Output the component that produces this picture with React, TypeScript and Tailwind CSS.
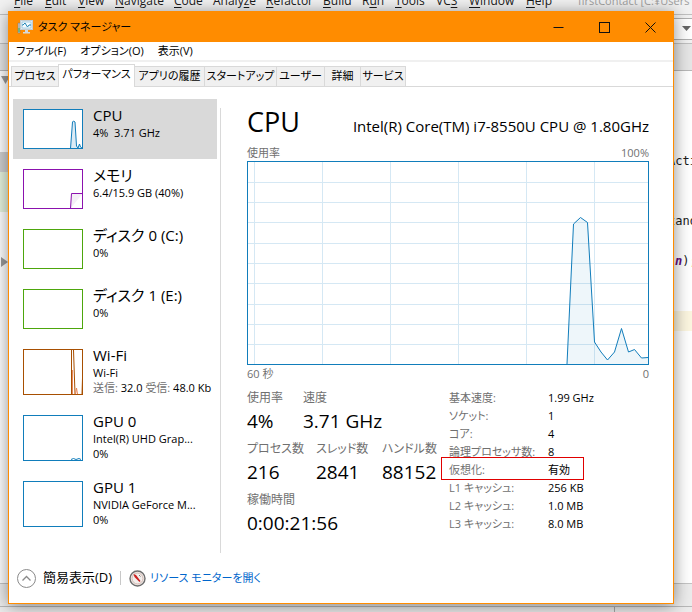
import React from "react";

interface Device {
  name: string;
  lines: React.ReactNode[];
  color: string;
  tall?: boolean;
  graph?: React.ReactNode;
}

const devices: Device[] = [
  {
    name: "CPU",
    lines: ["4%  3.71 GHz"],
    color: "border-[#117dbb]",
    graph: (
      <path
        d="M46.5 38.5 L48.5 12 L49.5 11 L51 12 L52.5 36 L54 38 L55.5 34 L56.5 37 L58 38"
        fill="#dcebf5"
        stroke="#117dbb"
      />
    ),
  },
  {
    name: "メモリ",
    lines: ["6.4/15.9 GB (40%)"],
    color: "border-[#8b12ae]",
    graph: (
      <path
        d="M46.5 38.5 L47.5 23.5 H58.5"
        fill="#f4f0f6"
        stroke="#8b12ae"
      />
    ),
  },
  { name: "ディスク 0 (C:)", lines: ["0%"], color: "border-[#4da60c]" },
  { name: "ディスク 1 (E:)", lines: ["0%"], color: "border-[#4da60c]" },
  {
    name: "Wi-Fi",
    lines: [
      "Wi-Fi",
      <>
        <span className="text-[#707070]">送信:</span> 32.0{" "}
        <span className="text-[#707070]">受信:</span> 48.0 Kb
      </>,
    ],
    color: "border-[#a74f01]",
    tall: true,
    graph: (
      <g fill="none" stroke="#a74f01">
        <path d="M47.5 44 V0 M49.5 0 L51 44 M58 44 L58.5 28" />
        <path d="M48.5 20 V44 M51.5 44 L52.5 38 L53.5 44" stroke="#e8875a" />
      </g>
    ),
  },
  {
    name: "GPU 0",
    lines: ["Intel(R) UHD Grap...", "0%"],
    color: "border-[#117dbb]",
    tall: true,
    graph: (
      <path
        d="M47 43.5 L49.5 42.5 L52 43.5 L55 42.5 L57 43.5"
        fill="none"
        stroke="#117dbb"
      />
    ),
  },
  {
    name: "GPU 1",
    lines: ["NVIDIA GeForce M...", "0%"],
    color: "border-[#117dbb]",
    tall: true,
  },
];

const tabs = [
  { label: "プロセス", width: "w-[48px]" },
  { label: "パフォーマンス", width: "w-[77px]", active: true },
  { label: "アプリの履歴", width: "w-[71px]" },
  { label: "スタートアップ", width: "w-[73px]" },
  { label: "ユーザー", width: "w-[49px]" },
  { label: "詳細", width: "w-[37px]" },
  { label: "サービス", width: "w-[46px]" },
];

const details = [
  ["基本速度:", "1.99 GHz"],
  ["ソケット:", "1"],
  ["コア:", "4"],
  ["論理プロセッサ数:", "8"],
  ["仮想化:", "有効"],
  ["L1 キャッシュ:", "256 KB"],
  ["L2 キャッシュ:", "1.0 MB"],
  ["L3 キャッシュ:", "8.0 MB"],
];

const ideMenu = [
  { label: "File", left: "left-[14px]" },
  { label: "Edit", left: "left-[45px]" },
  { label: "View", left: "left-[78px]" },
  { label: "Navigate", left: "left-[115px]" },
  { label: "Code", left: "left-[174px]" },
  { label: "Analyze", left: "left-[213px]", key: 5 },
  { label: "Refactor", left: "left-[266px]" },
  { label: "Build", left: "left-[323px]" },
  { label: "Run", left: "left-[362px]", key: 1 },
  { label: "Tools", left: "left-[395px]" },
  { label: "VCS", left: "left-[436px]", key: 2 },
  { label: "Window", left: "left-[469px]" },
  { label: "Help", left: "left-[526px]" },
];

// Editor window that stays behind the task manager
const Ide = () => (
  <div className="absolute inset-0 overflow-hidden bg-white text-[12px] text-[#1a1a1a]">
    <div className="absolute inset-x-0 top-0 h-[15px] border-b border-[#c0c0c0] bg-[#f2f2f2]">
      {ideMenu.map(({ label, left, key = 0 }) => (
        <span
          key={label}
          className={`absolute -top-[6px] leading-[14px] ${left}`}
        >
          {label.slice(0, key)}
          <u className="underline-offset-2">{label[key]}</u>
          {label.slice(key + 1)}
        </span>
      ))}
      <span className="absolute -top-[6px] left-[578px] whitespace-nowrap text-[11px] leading-[14px] text-[#a0a0a0]">
        firstContact [C:¥Users
      </span>
    </div>
    <div className="absolute inset-x-0 top-[15px] h-[29px] border-b border-[#c0c0c0] bg-[#f2f2f2]">
      <div className="absolute -right-1 top-[3px] h-[22px] w-[40px] border border-[#b0b0b0] bg-white" />
      <svg className="absolute right-0 top-[11px] h-[6px] w-[10px]" viewBox="0 0 10 6">
        <path d="M0 0 H9 L4.5 5 Z" fill="#666" />
      </svg>
    </div>
    <div className="absolute inset-x-0 top-[44px] h-[27px] border-b border-[#b8b8b8] bg-[#e6e6e6]" />
    <div className="absolute left-0 top-[152px] h-5 w-3 bg-[#d0d0d0]" />
    <div className="absolute left-0 top-[172px] h-10 w-3 bg-[#e6f3de]" />
    <svg className="absolute left-0 top-[76px] h-2 w-3" viewBox="0 0 12 8">
      <path d="M1 0 H10 L5.5 8 Z" fill="#9a9a9a" />
    </svg>
    <svg className="absolute left-0 top-[257px] h-[10px] w-3" viewBox="0 0 12 10">
      <path d="M1 0 L8 5 L1 10 Z" fill="#9a9a9a" />
    </svg>
    <div className="absolute right-0 top-[311px] h-5 w-6 bg-[#fcf6e0]" />
    <div className="absolute right-0 top-[153px] w-[24px] font-['DejaVu_Sans_Mono',monospace] leading-4">
      Acti
    </div>
    <div className="absolute right-0 top-[213px] w-[24px] font-['DejaVu_Sans_Mono',monospace] leading-4">
      tand
    </div>
    <div className="absolute right-0 top-[253px] w-[17px] font-['DejaVu_Sans_Mono',monospace] leading-4">
      <span className="whitespace-nowrap">
        <b className="italic text-[#660e7a]">n</b>)
        <span className="text-[#cc7832]">;</span>
      </span>
    </div>
    <div className="absolute inset-x-0 bottom-0 h-[29px] border-t border-[#c4c4c4] bg-[#ececec]">
      <div className="absolute inset-x-0 bottom-0 h-[6px] border-t border-[#b8b8b8]">
        <div className="ml-[614px] h-[5px] w-px bg-[#a8a8a8]" />
      </div>
    </div>
  </div>
);

const TitleBar = () => (
  <div className="flex h-[30px] items-center bg-[#ff8c00] pl-2">
    <svg className="h-4 w-4 shrink-0" viewBox="0 0 16 16">
      <path d="M1 4 H3 V14 H1 Z" fill="#c8c8c8" stroke="#777" strokeWidth=".5" />
      <path d="M1.5 9 H2.5 V13 H1.5 Z" fill="#35b24a" />
      <rect x="3.5" y="1.5" width="12" height="9" fill="#e8eef2" stroke="#c3ccd2" />
      <rect x="5" y="3" width="9" height="6" fill="#f5fbff" stroke="#5fa9cf" strokeWidth=".5" />
      <path d="M5 6 H6 L8 4 L10.5 8 L12 6 H14" fill="none" stroke="#2185b5" />
      <path d="M8 11 H11 V13 H13 V14.5 H6 V13 H8 Z" fill="#d5d9dc" />
    </svg>
    <h1 className="ml-[5px] text-[11px] leading-4">タスク マネージャー</h1>
    <div className="ml-auto flex h-full">
      <button aria-label="最小化" className="flex w-[46px] items-center justify-center">
        <svg className="h-[11px] w-[11px]" viewBox="0 0 11 11">
          <path d="M.5 5.5 H10.5" stroke="#111" />
        </svg>
      </button>
      <button aria-label="最大化" className="flex w-[46px] items-center justify-center">
        <svg className="h-[11px] w-[11px]" viewBox="0 0 11 11">
          <rect x=".5" y=".5" width="10" height="10" fill="none" stroke="#111" />
        </svg>
      </button>
      <button aria-label="閉じる" className="flex w-[46px] items-center justify-center">
        <svg className="h-[11px] w-[11px]" viewBox="0 0 11 11">
          <path d="M.5 .5 L10.5 10.5 M10.5 .5 L.5 10.5" stroke="#111" />
        </svg>
      </button>
    </div>
  </div>
);

const Sidebar = () => (
  <div className="w-[208px] shrink-0 border-r border-[#d9d9d9] [border-image:linear-gradient(#fff_10px,#d9d9d9_10px)_1]">
    {devices.map((device, index) => (
      <button
        key={device.name}
        className={`flex w-[204px] items-start gap-[10px] p-[10px] text-left ${
          index === 0 ? "bg-[#d9d9d9]" : ""
        } ${device.tall ? "h-[66px]" : "h-[60px]"}`}
      >
        <span
          className={`block w-[60px] shrink-0 border bg-white ${device.color} ${
            device.tall ? "h-[46px]" : "h-[40px]"
          }`}
        >
          <svg
            className="block h-full w-full"
            viewBox={device.tall ? "0 0 58 44" : "0 0 58 38"}
          >
            {device.graph}
          </svg>
        </span>
        <span className="-mt-1 block whitespace-pre">
          <span className="block text-[15px] leading-5">{device.name}</span>
          {device.lines.map((line, lineIndex) => (
            <span key={lineIndex} className="block text-[11px] leading-[15px]">
              {line}
            </span>
          ))}
        </span>
      </button>
    ))}
  </div>
);

const UsageChart = () => (
  <svg
    className="block h-[204px] w-full border border-[#117dbb]"
    viewBox="0 0 400 202"
    preserveAspectRatio="none"
    role="img"
    aria-label="使用率"
  >
    <g stroke="#d5e8f4">
      {[20.5, 40.5, 60.5, 81.5, 101.5, 121.5, 142.5, 162.5, 182.5].map((y) => (
        <path key={y} d={`M0 ${y} H400`} />
      ))}
      {[6.5, 74.5, 142.5, 210.5, 278.5, 346.5].map((x) => (
        <path key={x} d={`M${x} 0 V202`} />
      ))}
    </g>
    <path
      d="M319 202 L325.5 62 L332.5 55.5 L339.5 60.5 L346.5 180 L353 190 L359.5 198 L366.5 190 L373.5 166.5 L380.5 190 L386.5 187.5 L393.5 196 L400 195.5 V202 Z"
      fill="#117dbb"
      fillOpacity=".07"
    />
    <path
      d="M319 202 L325.5 62 L332.5 55.5 L339.5 60.5 L346.5 180 L353 190 L359.5 198 L366.5 190 L373.5 166.5 L380.5 190 L386.5 187.5 L393.5 196 L400 195.5"
      fill="none"
      stroke="#117dbb"
    />
  </svg>
);

interface StatProps {
  label: string;
  value: string;
  width?: string;
}

const Stat = ({ label, value, width = "" }: StatProps) => (
  <div className={width}>
    <dt className="text-[12px] leading-5 text-[#707070]">{label}</dt>
    <dd className="text-[19px] leading-[26px]">{value}</dd>
  </div>
);

const Footer = () => (
  <div className="flex h-[50px] items-center pl-2">
    <button className="flex items-center gap-[7px] text-[13px]">
      <svg className="h-[19px] w-[19px]" viewBox="0 0 19 19" fill="none">
        <circle cx="9.5" cy="9.5" r="9" stroke="#8a8a8a" />
        <path d="M5.5 11.5 L9.5 7.5 L13.5 11.5" stroke="#8a8a8a" strokeWidth="1.3" />
      </svg>
      簡易表示(D)
    </button>
    <span className="mx-2 h-[14px] w-px bg-[#c8c8c8]" />
    <a href="#" className="flex items-center gap-1 text-[11px] text-[#0066cc]">
      <svg className="h-[17px] w-[17px]" viewBox="0 0 17 17" fill="none">
        <circle cx="8.5" cy="8.5" r="7.5" fill="#f2eeec" stroke="#6d6d6d" strokeWidth="1.4" />
        <circle cx="8.5" cy="8.5" r="5.5" stroke="#d3b8b0" />
        <path d="M4.5 4 L7 5 L11.5 11 L10.5 12 L5.5 7 Z" fill="#cc1f1f" />
        <path d="M10 5 L11.5 6.5" stroke="#777" />
      </svg>
      リソース モニターを開く
    </a>
  </div>
);

const App: React.FC = () => {
  return (
    <div className="relative flex min-h-screen flex-col pb-2 pl-2 pr-[18px] pt-[11px] font-['Open_Sans','Noto_Sans_CJK_JP',sans-serif] text-black [font-feature-settings:'palt']">
      <Ide />
      <main className="relative flex grow flex-col border border-[#ff8c00] bg-white shadow-[0_2px_16px_rgba(0,0,0,0.45)]">
        <TitleBar />

        <nav className="flex h-5 items-center gap-[14px] border-b-2 border-[#f0f0f0] pl-[7px] text-[11px] leading-4">
          <button>ファイル(F)</button>
          <button>オプション(O)</button>
          <button>表示(V)</button>
        </nav>

        <div
          role="tablist"
          className="flex h-[25px] items-end border-b border-[#d9d9d9] pl-[2px] text-[11px]"
        >
          {tabs.map(({ label, width, active }) => (
            <button
              key={label}
              role="tab"
              aria-selected={!!active}
              className={`-mr-px flex shrink-0 items-center justify-center whitespace-nowrap border border-b-0 border-[#d9d9d9] ${width} ${
                active ? "-mb-px h-[23px] bg-white pb-1" : "h-5 bg-[#f0f0f0]"
              }`}
            >
              {label}
            </button>
          ))}
        </div>

        <div className="flex grow pl-1 pt-3">
          <Sidebar />

          <section className="min-w-0 grow pl-[26px] pr-6">
            <div className="flex items-baseline justify-between">
              <h2 className="text-[27px] leading-[46px]">CPU</h2>
              <p className="text-[15px]">
                Intel(R) Core(TM) i7-8550U CPU @ 1.80GHz
              </p>
            </div>
            <div className="flex justify-between text-[11px] leading-4 text-[#707070]">
              <span>使用率</span>
              <span>100%</span>
            </div>
            <UsageChart />
            <div className="flex justify-between text-[11px] leading-[18px] text-[#707070]">
              <span>60 秒</span>
              <span>0</span>
            </div>

            <div className="flex pt-[5px]">
              <dl className="w-[202px] shrink-0 space-y-[5px] whitespace-nowrap">
                <div className="flex">
                  <Stat label="使用率" value="4%" width="w-14" />
                  <Stat label="速度" value="3.71 GHz" />
                </div>
                <div className="flex">
                  <Stat label="プロセス数" value="216" width="w-[69px]" />
                  <Stat label="スレッド数" value="2841" width="w-[66px]" />
                  <Stat label="ハンドル数" value="88152" />
                </div>
                <Stat label="稼働時間" value="0:00:21:56" />
              </dl>

              <table className="mt-px h-36 whitespace-nowrap text-left text-[11px] leading-[18px]">
                <tbody>
                  {details.map(([label, value]) => (
                    <tr key={label}>
                      <th
                        scope="row"
                        className="relative w-[99px] p-0 font-normal text-[#707070]"
                      >
                        {label}
                        {label === "仮想化:" && (
                          <span className="absolute -left-2 -top-1 h-[23px] w-[143px] border border-[#e00000]" />
                        )}
                      </th>
                      <td className="p-0">{value}</td>
                    </tr>
                  ))}
                </tbody>
              </table>
            </div>
          </section>
        </div>

        <Footer />
      </main>
    </div>
  );
};

export default App;
